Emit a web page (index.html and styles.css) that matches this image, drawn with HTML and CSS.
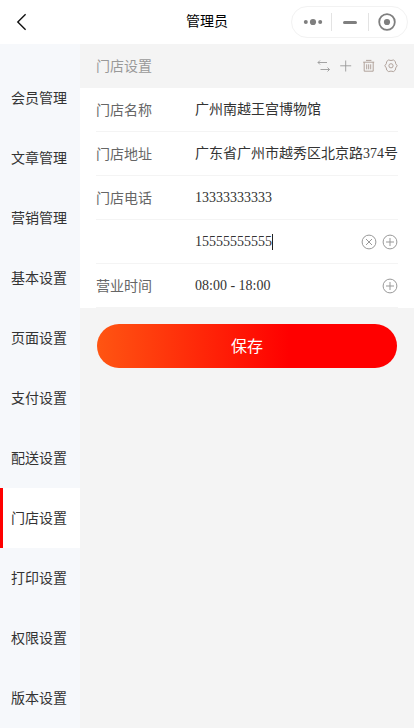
FILE: index.html
```html
<!DOCTYPE html>
<html lang="zh-CN">
<head>
<meta charset="utf-8">
<title>管理员</title>
<link rel="stylesheet" href="styles.css">
</head>
<body>
<header class="navbar">
  <svg class="back" width="12" height="18" viewBox="0 0 12 18"><path d="M9.6 1.2 1.8 9 9.6 16.8"/></svg>
  <h1 class="title">管理员</h1>
  <div class="capsule">
    <span class="cell"><svg width="20" height="8" viewBox="0 0 20 8"><circle cx="2.8" cy="4" r="2"/><circle cx="10" cy="4" r="3.1"/><circle cx="17.2" cy="4" r="2"/></svg></span>
    <span class="cell"><span class="minus"></span></span>
    <span class="cell"><svg width="18" height="18" viewBox="0 0 18 18"><circle class="ring" cx="9" cy="9" r="7.8"/><circle cx="9" cy="9" r="3.1"/></svg></span>
  </div>
</header>
<div class="layout">
  <nav class="sidebar">
    <a class="item">会员管理</a>
    <a class="item">文章管理</a>
    <a class="item">营销管理</a>
    <a class="item">基本设置</a>
    <a class="item">页面设置</a>
    <a class="item">支付设置</a>
    <a class="item">配送设置</a>
    <a class="item active">门店设置</a>
    <a class="item">打印设置</a>
    <a class="item">权限设置</a>
    <a class="item">版本设置</a>
  </nav>
  <main class="content">
    <div class="section-head">
      <h2 class="section-title">门店设置</h2>
      <div class="tools">
        <svg class="icon" width="14" height="14" viewBox="0 0 14 14"><path d="M3 1.5 1 3.5l2 2M1 3.5H10M10.5 8.5l2 2-2 2M12.5 10.5H3.5"/></svg>
        <svg class="icon" width="14" height="14" viewBox="0 0 14 14"><path d="M6.7 1.5v11M1.2 6.8h11"/></svg>
        <svg class="icon warm" width="14" height="14" viewBox="0 0 14 14"><path d="M1.2 3.2h11M4 1.4h5.4M2.2 3.2v9h9v-9M4.7 5.3v5M6.7 5.3v5M8.7 5.3v5"/></svg>
        <svg class="icon warm" width="14" height="14" viewBox="0 0 14 14"><path d="M4.5 1 Q7 2 9.5 1L11.3 2.5Q11.2 4.8 13.2 6.8 11.2 8.8 11.3 11.1L9.5 12.6Q7 11.6 4.5 12.6L2.7 11.1Q2.8 8.8 .8 6.8 2.8 4.8 2.7 2.5Z"/><circle cx="7" cy="6.8" r="2.1"/></svg>
      </div>
    </div>
    <div class="form">
      <div class="row"><span class="label">门店名称</span><span class="value">广州南越王宫博物馆</span></div>
      <div class="row"><span class="label">门店地址</span><span class="value">广东省广州市越秀区北京路374号</span></div>
      <div class="row"><span class="label">门店电话</span><span class="value">13333333333</span></div>
      <div class="row">
        <span class="label"></span><span class="value focused">15555555555</span>
        <div class="actions">
          <svg class="round" width="16" height="16" viewBox="0 0 16 16"><circle cx="8" cy="8" r="6.9"/><path d="m5 5 6 6M11 5l-6 6"/></svg>
          <svg class="round" width="16" height="16" viewBox="0 0 16 16"><circle cx="8" cy="8" r="6.9"/><path d="M8 4v8M4 8h8"/></svg>
        </div>
      </div>
      <div class="row">
        <span class="label">营业时间</span><span class="value">08:00 - 18:00</span>
        <div class="actions">
          <svg class="round" width="16" height="16" viewBox="0 0 16 16"><circle cx="8" cy="8" r="6.9"/><path d="M8 4v8M4 8h8"/></svg>
        </div>
      </div>
    </div>
    <button class="save">保存</button>
  </main>
</div>
</body>
</html>
```
FILE: styles.css
```css
* { box-sizing: border-box; }

body {
  margin: 0;
  height: 728px;
  overflow: hidden;
  display: flex;
  flex-direction: column;
  background: #f4f4f4;
  color: #333;
  font: 14px/20px "Liberation Serif", "Noto Sans CJK SC", serif;
}

h1, h2 { margin: 0; font-size: 14px; font-weight: 400; }

.navbar {
  height: 44px;
  flex: none;
  display: grid;
  grid-template-columns: 1fr auto 1fr;
  align-items: center;
  padding: 0 6px 0 16px;
  background: #fff;
}
.title { color: #000; transform: translateX(-5px); }
.back { fill: none; stroke: #111; stroke-width: 1.4; }

.capsule {
  justify-self: end;
  width: 117px;
  height: 32px;
  display: grid;
  grid-template-columns: 36px 37px 36px;
  align-items: center;
  padding: 0 3px;
  border: 1px solid #f2f2f2;
  border-radius: 16px;
}
.cell {
  height: 18px;
  display: flex;
  align-items: center;
  justify-content: center;
}
.cell + .cell { border-left: 1px solid #e3e3e3; }
.cell svg { flex: none; fill: #7f7f7f; }
.cell .ring { fill: none; stroke: #7f7f7f; stroke-width: 1.8; }
.minus { width: 14px; height: 3px; border-radius: 2px; background: #7f7f7f; }

.layout { flex: 1; display: flex; min-height: 0; }

.sidebar { width: 80px; flex: none; padding-top: 24px; background: #f6f8fb; }
.item {
  display: flex;
  align-items: center;
  height: 60px;
  padding: 2px 0 0 8px;
  border-left: 3px solid transparent;
}
.item.active { background: #fff; border-left-color: #f00; }

.content { flex: 1; min-width: 0; }
.section-head {
  height: 44px;
  display: flex;
  align-items: center;
  justify-content: space-between;
  padding: 0 16px;
}
.section-title { padding-top: 2px; color: #999; }
.tools { display: flex; gap: 8.4px; }
.icon { fill: none; stroke: #999; stroke-width: .9; }
.icon.warm { stroke: #a99a92; }

.form { padding: 0 16px; background: #fff; }
.row {
  height: 44px;
  display: flex;
  align-items: center;
  border-bottom: 1px solid #f4f4f4;
}
.label { width: 99px; flex: none; padding-top: 2px; color: #666; }
.value { white-space: nowrap; }
.focused { height: 16px; line-height: 16px; border-right: 1px solid #222; }
.actions { display: flex; gap: 5px; margin-left: auto; }
.round { fill: none; stroke: #999; stroke-width: 1; }

.save {
  display: block;
  width: 300px;
  height: 44px;
  margin: 16px 17px;
  padding: 0 0 2px;
  border: 0;
  border-radius: 22px;
  background: linear-gradient(90deg, #ff5512, #f00 64%);
  color: #fff;
  font: 16px/42px "Noto Sans CJK SC", sans-serif;
}
```
